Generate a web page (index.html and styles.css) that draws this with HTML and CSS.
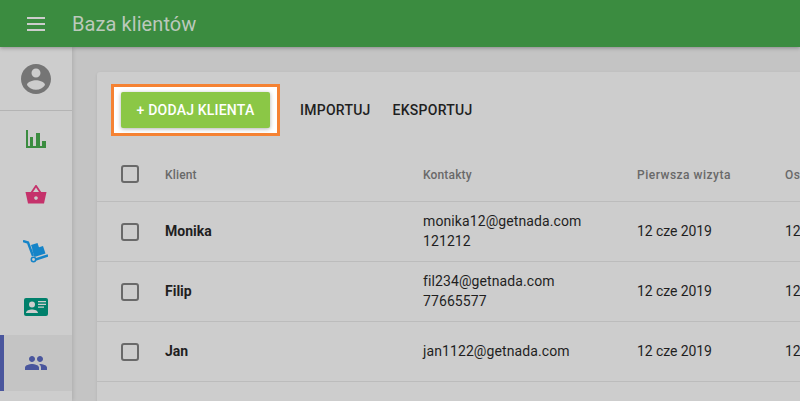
FILE: index.html
```html
<!DOCTYPE html>
<html>
    <head>
        <meta charset="UTF-8">
        <meta name="viewport" content="width=device-width, initial-scale=1.0">
        <title>Baza klientów</title>
        <link rel="stylesheet" href="styles.css">
    </head>
    <body>
        <div class="header">
            <div class="burger"><span></span><span></span><span></span></div>
            <h1>Baza klientów</h1>
        </div>

        <div class="container">
            <div class="sidebar">
                <div class="avatar">
                    <svg viewBox="0 0 24 24" width="36" height="36"><path fill="#757575" d="M12 2C6.48 2 2 6.48 2 12s4.48 10 10 10 10-4.48 10-10S17.52 2 12 2zm0 3c1.66 0 3 1.34 3 3s-1.34 3-3 3-3-1.34-3-3 1.34-3 3-3zm0 14.2c-2.5 0-4.71-1.28-6-3.22.03-1.99 4-3.08 6-3.08s5.97 1.09 6 3.08c-1.29 1.94-3.5 3.22-6 3.22z"/></svg>
                </div>
                <a class="nav-item" href="#">
                    <svg viewBox="0 0 20 18" width="20" height="18"><path fill="#3b8c40" d="M0 0h2v16h18v2H0zM4 7h3v9H4zM10 3h4v13h-4zM16 11h4v5h-4z"/></svg>
                </a>
                <a class="nav-item" href="#">
                    <svg viewBox="0 0 24 24" width="24" height="24"><path fill="#c5326b" d="M17.21 9l-4.38-6.56c-.19-.28-.51-.42-.83-.42-.32 0-.64.14-.83.43L6.79 9H1.5L4 20.500h16l2.500-11.500h-5.290zM9 9l3-4.400L15 9H9zm3 7.800c-1 0-1.800-.8-1.800-1.800s.8-1.800 1.800-1.800 1.800.8 1.800 1.800-.8 1.800-1.800 1.800z"/></svg>
                </a>
                <a class="nav-item cart" href="#">
                    <svg viewBox="0 0 25 23" width="25" height="23">
                        <path fill="none" stroke="#1584c8" stroke-width="2.400" d="M0 1l5 1.500L10 16M12.500 19.500L25 15.500"/>
                        <circle cx="10.500" cy="19.500" r="2.200" fill="none" stroke="#1584c8" stroke-width="1.500"/>
                        <path fill="#1584c8" d="M9 9.500l11-3.500 2.500 7.500-11 3.500zM8 5l6.500-2 1.500 4.500-6.500 2z"/>
                    </svg>
                </a>
                <a class="nav-item" href="#">
                    <svg viewBox="0 0 24 18" width="24" height="18"><rect width="24" height="18" rx="2" fill="#00806b"/><circle cx="8" cy="6.500" r="3" fill="#cdcdcd"/><path fill="#cdcdcd" d="M2 15c0-2.500 3.500-3.500 6-3.500s6 1 6 3.500zM14 3h8v1.200h-8zM14 5.800h8V7h-8zM14 8.500h6v1.200h-6z"/></svg>
                </a>
                <a class="nav-item active" href="#">
                    <svg viewBox="0 0 24 24" width="24" height="24"><path fill="#4a569d" d="M16 11c1.660 0 3-1.340 3-3s-1.340-3-3-3-3 1.340-3 3 1.340 3 3 3zm-8 0c1.660 0 3-1.340 3-3S9.660 5 8 5 5 6.340 5 8s1.340 3 3 3zm0 2c-2.330 0-7 1.170-7 3.500V19h14v-2.500C15 14.170 10.330 13 8 13zm8 0c-.29 0-.62.02-.97.05 1.160.84 1.970 1.970 1.970 3.450V19h6v-2.500c0-2.330-4.670-3.500-7-3.500z"/></svg>
                </a>
            </div>

            <div class="content">
                <div class="card">
                    <div class="toolbar">
                        <div class="highlight">
                            <button type="button" class="btn-add">+ DODAJ KLIENTA</button>
                        </div>
                        <button type="button" class="btn-text">IMPORTUJ</button>
                        <button type="button" class="btn-text">EKSPORTUJ</button>
                    </div>

                    <div class="row row-head">
                        <div class="cell-check"><span class="checkbox"></span></div>
                        <div>Klient</div>
                        <div>Kontakty</div>
                        <div class="wide">Pierwsza wizyta</div>
                        <div class="wide">Ostatnia wizyta</div>
                    </div>
                    <div class="row">
                        <div class="cell-check"><span class="checkbox"></span></div>
                        <div class="name">Monika</div>
                        <div class="contact">monika12@getnada.com<br>121212</div>
                        <div class="date">12 cze 2019</div>
                        <div class="date">12 cze 2019</div>
                    </div>
                    <div class="row">
                        <div class="cell-check"><span class="checkbox"></span></div>
                        <div class="name">Filip</div>
                        <div class="contact">fil234@getnada.com<br>77665577</div>
                        <div class="date">12 cze 2019</div>
                        <div class="date">12 cze 2019</div>
                    </div>
                    <div class="row">
                        <div class="cell-check"><span class="checkbox"></span></div>
                        <div class="name">Jan</div>
                        <div class="contact">jan1122@getnada.com</div>
                        <div class="date">12 cze 2019</div>
                        <div class="date">12 cze 2019</div>
                    </div>
                </div>
            </div>
        </div>
    </body>
</html>
```

FILE: styles.css
```css
html, body {
    margin: 0;
    padding: 0;
    height: 100%;
    overflow: hidden;
}
body {
    font-family: Roboto, "Liberation Sans", sans-serif;
    font-size: 14px;
    color: #1f1f1f;
    background-color: #c4c4c4;
}
.header {
    display: flex;
    align-items: center;
    height: 47px;
    background-color: #3b8c40;
    box-shadow: 0 1px 4px rgba(0, 0, 0, 0.3);
    position: relative;
    z-index: 2;
}
.burger {
    display: flex;
    flex-direction: column;
    gap: 4px;
    width: 18px;
    margin-left: 27px;
    margin-right: 27px;
}
.burger span {
    height: 2px;
    background-color: #cdcdcd;
}
.header h1 {
    margin: 0;
    font-size: 20px;
    font-weight: 400;
    letter-spacing: 0.08px;
    color: #bcc9bc;
}
.container {
    display: flex;
    height: 354px;
    overflow: hidden;
}
.sidebar {
    flex: none;
    width: 72px;
    background-color: #cdcdcd;
    box-shadow: 1px 0 4px rgba(0, 0, 0, 0.12);
}
.avatar {
    display: flex;
    align-items: center;
    justify-content: center;
    height: 63px;
    border-bottom: 1px solid #b4b4b4;
}
.nav-item {
    display: flex;
    align-items: center;
    justify-content: center;
    height: 56px;
}
.nav-item.cart {
    padding-right: 1px;
}
.nav-item.active {
    background-color: #c4c4c4;
    border-left: 4px solid #4a569d;
    padding-right: 4px;
    box-sizing: border-box;
}
.content {
    flex: 1;
    min-width: 0;
    padding: 25px 0 0 25px;
}
.card {
    width: 760px;
    min-height: 400px;
    background-color: #cdcdcd;
    border-radius: 3px;
    box-shadow: 0 1px 3px rgba(0, 0, 0, 0.1);
}
.toolbar {
    display: flex;
    align-items: center;
    padding: 12px 0 11px 14px;
}
.highlight {
    padding: 5px 7px;
    border: 3px solid #f58233;
    background-color: #ffffff;
    margin-right: 12px;
}
.btn-add {
    display: block;
    width: 149px;
    height: 36px;
    padding: 0;
    border: 0;
    border-radius: 2px;
    background-color: #8bc746;
    color: #ffffff;
    font-family: inherit;
    font-size: 14px;
    font-weight: 500;
    letter-spacing: 0.2px;
    box-shadow: 0 1px 4px rgba(0, 0, 0, 0.3);
}
.btn-text {
    padding: 0 8px;
    margin-right: 6px;
    border: 0;
    background: none;
    color: #1f1f1f;
    font-family: inherit;
    font-size: 14px;
    font-weight: 500;
    letter-spacing: 0.25px;
}
.row {
    display: grid;
    grid-template-columns: 68px 258px 214px 148px 1fr;
    align-items: center;
    box-sizing: border-box;
    height: 60px;
    padding-bottom: 2px;
    border-bottom: 1px solid #bcbcbc;
    line-height: 20px;
    white-space: nowrap;
}
.row-head {
    height: 55px;
    padding-bottom: 0;
    padding-top: 1px;
    font-size: 12px;
    font-weight: 500;
    letter-spacing: 0.15px;
    color: #696969;
}
.row-head .wide {
    letter-spacing: 0.5px;
}
.cell-check {
    padding-left: 24px;
    padding-top: 2px;
    display: flex;
}
.row-head .cell-check {
    padding-top: 0;
    padding-bottom: 2px;
}
.checkbox {
    box-sizing: border-box;
    width: 18px;
    height: 18px;
    border: 2px solid #696969;
    border-radius: 3px;
}
.name {
    font-weight: 700;
}
.contact {
    letter-spacing: 0.1px;
}
.date {
    letter-spacing: -0.08px;
}
```
